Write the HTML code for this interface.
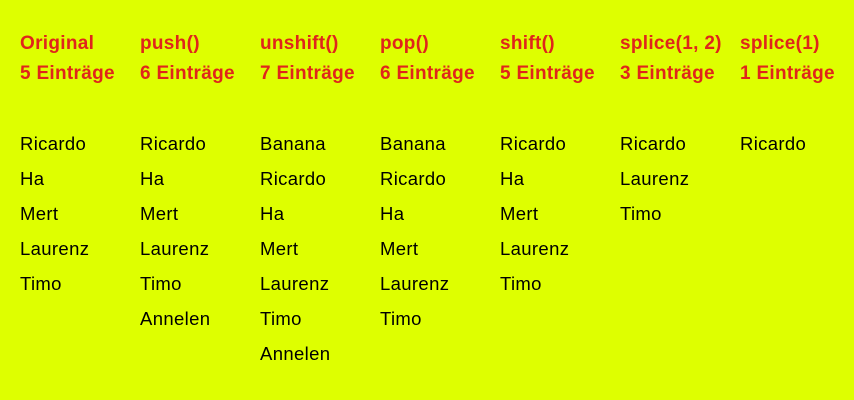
<!DOCTYPE html>
<html><head><meta charset="utf-8"><style>
body{margin:0;width:854px;height:400px;background:#DEFF00;font-family:"Liberation Sans",Arial,sans-serif;position:relative;overflow:hidden}
.c{position:absolute;top:0;width:120px}
.h{position:absolute;left:0;color:#E0251B;font-weight:bold;font-size:19px;letter-spacing:0.3px;white-space:nowrap;line-height:20px}
.d{position:absolute;left:0;color:#000;font-size:18.5px;letter-spacing:0.35px;white-space:nowrap;line-height:20px}
</style></head><body>
<div class="c" style="left:20px"><div class="h" style="top:34px">Original</div><div class="h" style="top:64px">5 Einträge</div>
<div class="d" style="top:134px">Ricardo</div><div class="d" style="top:169px">Ha</div><div class="d" style="top:204px">Mert</div><div class="d" style="top:239px">Laurenz</div><div class="d" style="top:274px">Timo</div></div>
<div class="c" style="left:140px"><div class="h" style="top:34px">push()</div><div class="h" style="top:64px">6 Einträge</div>
<div class="d" style="top:134px">Ricardo</div><div class="d" style="top:169px">Ha</div><div class="d" style="top:204px">Mert</div><div class="d" style="top:239px">Laurenz</div><div class="d" style="top:274px">Timo</div><div class="d" style="top:309px">Annelen</div></div>
<div class="c" style="left:260px"><div class="h" style="top:34px">unshift()</div><div class="h" style="top:64px">7 Einträge</div>
<div class="d" style="top:134px">Banana</div><div class="d" style="top:169px">Ricardo</div><div class="d" style="top:204px">Ha</div><div class="d" style="top:239px">Mert</div><div class="d" style="top:274px">Laurenz</div><div class="d" style="top:309px">Timo</div><div class="d" style="top:344px">Annelen</div></div>
<div class="c" style="left:380px"><div class="h" style="top:34px">pop()</div><div class="h" style="top:64px">6 Einträge</div>
<div class="d" style="top:134px">Banana</div><div class="d" style="top:169px">Ricardo</div><div class="d" style="top:204px">Ha</div><div class="d" style="top:239px">Mert</div><div class="d" style="top:274px">Laurenz</div><div class="d" style="top:309px">Timo</div></div>
<div class="c" style="left:500px"><div class="h" style="top:34px">shift()</div><div class="h" style="top:64px">5 Einträge</div>
<div class="d" style="top:134px">Ricardo</div><div class="d" style="top:169px">Ha</div><div class="d" style="top:204px">Mert</div><div class="d" style="top:239px">Laurenz</div><div class="d" style="top:274px">Timo</div></div>
<div class="c" style="left:620px"><div class="h" style="top:34px">splice(1, 2)</div><div class="h" style="top:64px">3 Einträge</div>
<div class="d" style="top:134px">Ricardo</div><div class="d" style="top:169px">Laurenz</div><div class="d" style="top:204px">Timo</div></div>
<div class="c" style="left:740px"><div class="h" style="top:34px">splice(1)</div><div class="h" style="top:64px">1 Einträge</div>
<div class="d" style="top:134px">Ricardo</div></div>
</body></html>
